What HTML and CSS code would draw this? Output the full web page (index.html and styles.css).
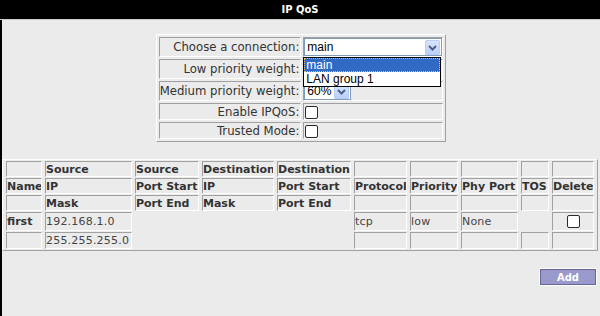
FILE: index.html
```html
<!DOCTYPE html>
<html>
<head>
<meta charset="utf-8">
<link rel="stylesheet" href="styles.css">
</head>
<body>
<div class="header">IP QoS</div>
<div class="content">
  <div class="form-wrap">
    <table class="form">
      <tr class="r-tall">
        <td class="lbl">Choose a connection:</td>
        <td class="val">
          <div class="select wide">
            <span class="sel-text">main</span>
            <span class="arrow"><svg width="15" height="15" viewBox="0 0 15 15"><path d="M4 6 L7.5 9.5 L11 6" fill="none" stroke="#4d6185" stroke-width="2"/></svg></span>
          </div>
          <div class="dropdown">
            <div class="opt active">main</div>
            <div class="opt">LAN group 1</div>
          </div>
        </td>
      </tr>
      <tr class="r-tall">
        <td class="lbl">Low priority weight:</td>
        <td class="val">
          <div class="select narrow">
            <span class="sel-text"></span>
            <span class="arrow"><svg width="15" height="15" viewBox="0 0 15 15"><path d="M4 6 L7.5 9.5 L11 6" fill="none" stroke="#4d6185" stroke-width="2"/></svg></span>
          </div>
        </td>
      </tr>
      <tr class="r-tall">
        <td class="lbl">Medium priority weight:</td>
        <td class="val">
          <div class="select narrow">
            <span class="sel-text">60%</span>
            <span class="arrow"><svg width="15" height="15" viewBox="0 0 15 15"><path d="M4 6 L7.5 9.5 L11 6" fill="none" stroke="#4d6185" stroke-width="2"/></svg></span>
          </div>
        </td>
      </tr>
      <tr class="r-short">
        <td class="lbl">Enable IPQoS:</td>
        <td class="val"><span class="cb"></span></td>
      </tr>
      <tr class="r-short">
        <td class="lbl">Trusted Mode:</td>
        <td class="val"><span class="cb"></span></td>
      </tr>
    </table>
  </div>

  <table class="rules">
    <colgroup>
      <col class="c-name"><col class="c-sip"><col class="c-sport"><col class="c-dip"><col class="c-dport">
      <col class="c-proto"><col class="c-prio"><col class="c-phy"><col class="c-tos"><col class="c-del">
    </colgroup>
    <tr class="hrow">
      <th>&nbsp;</th><th>Source</th><th>Source</th><th>Destination</th><th>Destination</th>
      <th>&nbsp;</th><th>&nbsp;</th><th>&nbsp;</th><th>&nbsp;</th><th>&nbsp;</th>
    </tr>
    <tr class="hrow">
      <th>Name</th><th>IP</th><th>Port Start</th><th>IP</th><th>Port Start</th>
      <th>Protocol</th><th>Priority</th><th>Phy Port</th><th>TOS</th><th>Delete</th>
    </tr>
    <tr class="hrow">
      <th>&nbsp;</th><th>Mask</th><th>Port End</th><th>Mask</th><th>Port End</th>
      <th>&nbsp;</th><th>&nbsp;</th><th>&nbsp;</th><th>&nbsp;</th><th>&nbsp;</th>
    </tr>
    <tr class="drow1">
      <td class="bold">first</td><td>192.168.1.0</td><td></td><td></td><td></td>
      <td>tcp</td><td>low</td><td>None</td><td></td><td class="center"><span class="cb"></span></td>
    </tr>
    <tr class="drow2">
      <td>&nbsp;</td><td>255.255.255.0</td><td></td><td></td><td></td>
      <td>&nbsp;</td><td>&nbsp;</td><td>&nbsp;</td><td>&nbsp;</td><td>&nbsp;</td>
    </tr>
  </table>

  <div class="actions">
    <button class="btn">Add</button>
  </div>
</div>
</body>
</html>
```

FILE: styles.css
```css
html, body {
  margin: 0;
  padding: 0;
  background: #ebebeb;
}
body {
  font-family: "DejaVu Sans", Verdana, sans-serif;
  font-size: 11.7px;
  color: #333;
  height: 316px;
  overflow: hidden;
}
.header {
  height: 19px;
  background: #000;
  color: #fff;
  font-weight: bold;
  font-size: 10px;
  line-height: 19px;
  text-align: center;
  border-bottom: 1px solid #c8c8c8;
}
.content {
  border-left: 2px solid #000;
  height: 296px;
  box-sizing: border-box;
  padding-top: 14px;
}
.form-wrap {
  display: flex;
  justify-content: center;
}
table {
  border-collapse: separate;
  empty-cells: hide;
}
.form {
  border: 1px solid;
  border-color: #fff #a0a0a0 #a0a0a0 #fff;
  border-spacing: 2px;
}
.form td {
  border: 1px solid;
  border-color: #a0a0a0 #fff #fff #a0a0a0;
  padding: 0;
  line-height: 14px;
}
.form .lbl {
  width: 136px;
  text-align: right;
  padding-right: 1px;
  white-space: nowrap;
}
.form .val {
  width: 136px;
  position: relative;
}
.r-tall td { height: 18px; }
.r-short td { height: 15px; }

.select {
  height: 18px;
  box-sizing: border-box;
  border: 1px solid #7f9db9;
  background: #fff;
  display: flex;
  align-items: center;
  justify-content: space-between;
  color: #000;
  font-family: "Liberation Sans", Arial, sans-serif;
  font-size: 12px;
}
.select.wide { width: 138px; }
.select.narrow { width: 47px; }
.sel-text { padding-left: 2px; }
.arrow {
  width: 15px;
  height: 15px;
  margin-right: 1px;
  background: linear-gradient(#dbe7fd, #b8cdfa);
  border-radius: 2px;
  box-shadow: inset 0 0 0 1px #b9cdf6;
  display: flex;
}
.dropdown {
  position: absolute;
  left: -1px;
  top: 19px;
  width: 138px;
  box-sizing: border-box;
  border: 1px solid #000;
  background: #fff;
  z-index: 5;
  color: #000;
  font-family: "Liberation Sans", Arial, sans-serif;
  font-size: 12px;
}
.opt {
  height: 14px;
  line-height: 14px;
  padding-left: 2px;
}
.opt.active {
  background: #316ac5;
  color: #fff;
  outline: 1px dotted #f5c064;
  outline-offset: -1px;
}

.cb {
  display: inline-block;
  width: 11px;
  height: 11px;
  border: 1px solid #2a2a2a;
  border-radius: 2px;
  background: #fff;
  vertical-align: middle;
  margin-left: 1px;
}

.rules {
  margin-top: 17px;
  width: 595px;
  table-layout: fixed;
  border: 1px solid;
  border-color: #fff #a0a0a0 #a0a0a0 #fff;
  border-spacing: 3px 1px;
  margin-left: 0;
}
.rules th, .rules td {
  border: 1px solid;
  border-color: #a0a0a0 #fff #fff #a0a0a0;
  padding: 0;
  text-align: left;
  white-space: nowrap;
  overflow: hidden;
  line-height: 13px;
}
.rules th {
  font-weight: bold;
  font-size: 11px;
  color: #333;
  height: 14px;
}
.rules td {
  color: #444;
  font-size: 11px;
  letter-spacing: 0.2px;
}
.rules .bold { font-weight: bold; font-size: 11px; color: #333; letter-spacing: 0; }
.rules .center { text-align: center; }
.drow1 td { height: 17px; }
.drow2 td { height: 15px; }
.rules td .cb { margin-left: 0; }

.c-name { width: 36px; }
.c-sip { width: 87px; }
.c-sport { width: 64px; }
.c-dip { width: 72px; }
.c-dport { width: 74px; }
.c-proto { width: 53px; }
.c-prio { width: 48px; }
.c-phy { width: 57px; }
.c-tos { width: 28px; }
.c-del { width: 42px; }

.actions {
  display: flex;
  justify-content: flex-end;
  padding-top: 18px;
  padding-right: 4px;
}
.btn {
  width: 56px;
  height: 16px;
  padding: 0;
  background: #9999cc;
  color: #fff;
  font-family: "DejaVu Sans", Verdana, sans-serif;
  font-weight: bold;
  font-size: 10px;
  border: 1px solid #66669a;
  box-shadow: 0 0 0 1px #fff;
}
```
